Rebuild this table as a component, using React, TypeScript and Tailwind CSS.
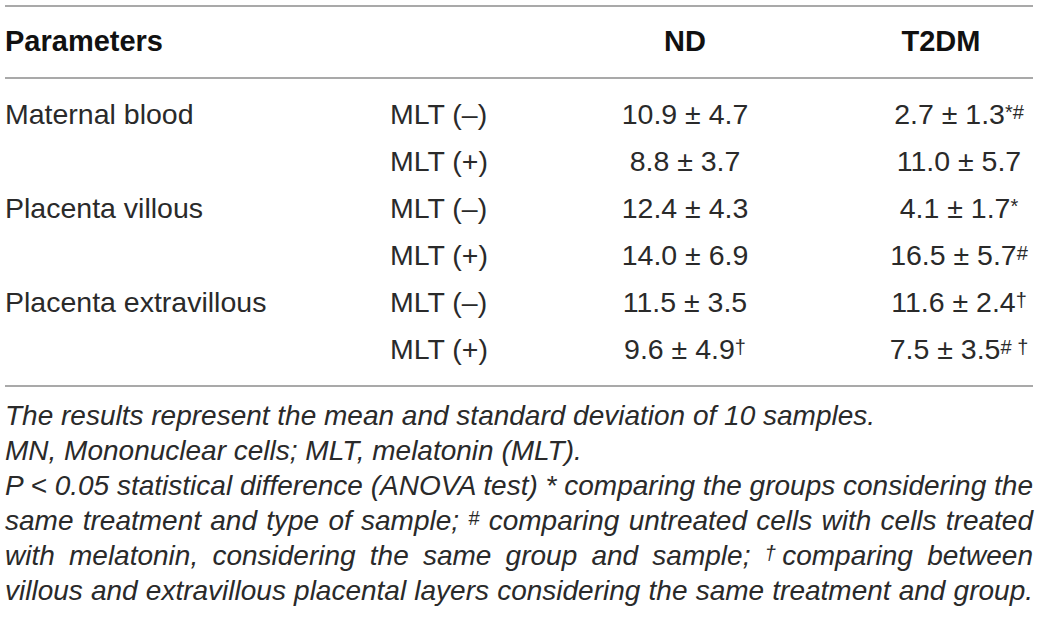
import React from "react";

type Row = {
  label: string;
  mlt: string;
  nd: string;
  ndSup?: string;
  t2: string;
  t2Sup?: string;
};

const rows: Row[] = [
  { label: "Maternal blood", mlt: "MLT (–)", nd: "10.9 ± 4.7", t2: "2.7 ± 1.3", t2Sup: "*#" },
  { label: "", mlt: "MLT (+)", nd: "8.8 ± 3.7", t2: "11.0 ± 5.7" },
  { label: "Placenta villous", mlt: "MLT (–)", nd: "12.4 ± 4.3", t2: "4.1 ± 1.7", t2Sup: "*" },
  { label: "", mlt: "MLT (+)", nd: "14.0 ± 6.9", t2: "16.5 ± 5.7", t2Sup: "#" },
  { label: "Placenta extravillous", mlt: "MLT (–)", nd: "11.5 ± 3.5", t2: "11.6 ± 2.4", t2Sup: "†" },
  { label: "", mlt: "MLT (+)", nd: "9.6 ± 4.9", ndSup: "†", t2: "7.5 ± 3.5", t2Sup: "# †" },
];

const grid = "grid grid-cols-[385px_215px_160px_268px] items-center";

function Sup({ children, small }: { children?: string; small?: boolean }) {
  if (!children) return null;
  return (
    <sup className={`relative leading-none ${small ? "top-[-5px] text-[20px]" : "top-[-5px] text-[20px]"}`}>
      {children}
    </sup>
  );
}

export default function App() {
  return (
    <div className="h-[620px] w-[1040px] bg-white pt-[5px] pl-[5px] font-['Liberation_Sans',Arial,sans-serif] text-[#2a2a2a]">
      <div className="w-[1028px]">
        <div className="h-[2px] bg-[#a9a9a9]" />
        <div className={`${grid} h-[70px] text-[29px] font-bold text-[#111]`}>
          <div>Parameters</div>
          <div />
          <div className="text-center">ND</div>
          <div className="pl-[84px] text-center">T2DM</div>
        </div>
        <div className="h-[2px] bg-[#a9a9a9]" />

        <div className="py-[12px] text-[28.5px]">
          {rows.map((r, i) => (
            <div key={i} className={`${grid} h-[47px]`}>
              <div>{r.label}</div>
              <div>{r.mlt}</div>
              <div className="text-center">
                {r.nd}
                <Sup>{r.ndSup}</Sup>
              </div>
              <div className="pl-[120px] text-center">
                {r.t2}
                <Sup>{r.t2Sup}</Sup>
              </div>
            </div>
          ))}
        </div>
        <div className="h-[2px] bg-[#a9a9a9]" />

        <div className="pt-[11px] text-[28px] italic leading-[35px]">
          <div>The results represent the mean and standard deviation of 10 samples.</div>
          <div>MN, Mononuclear cells; MLT, melatonin (MLT).</div>
          <div className="text-justify [text-align-last:justify]">
            P &lt; 0.05 statistical difference (ANOVA test) * comparing the groups considering the
          </div>
          <div className="text-justify [text-align-last:justify]">
            same treatment and type of sample; <Sup small>#</Sup> comparing untreated cells with cells treated
          </div>
          <div className="text-justify [text-align-last:justify]">
            with melatonin, considering the same group and sample; <Sup small>†</Sup>comparing between
          </div>
          <div className="text-justify [text-align-last:justify]">
            villous and extravillous placental layers considering the same treatment and group.
          </div>
        </div>
      </div>
    </div>
  );
}
